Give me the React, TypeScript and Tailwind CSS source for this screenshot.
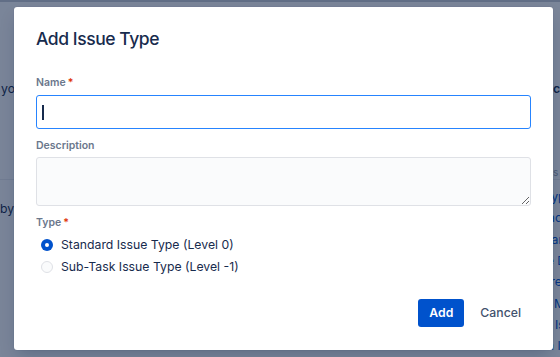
import React from 'react';

const listItems = [
  'CKP: Issue Type Scheme I',
  'CKP: Bug Tracking Issues',
  'CKP: Task Management Is:',
  'CKP: Service Desk Requests',
  'CKP: Software Development Pro',
  'CKP: Project Management Is:',
  'CKP: Default Issue Type I',
  'CKP: Kanban Issue Type Scheme',
];

const Label = ({ text, required, className = '' }: { text: string; required?: boolean; className?: string }) => (
  <label className={`flex h-[14px] items-center text-[10.5px] leading-[14px] font-semibold text-[#6b778c] ${className}`}>
    {text}
    {required && <span className="ml-[2px] text-[#de350b]">*</span>}
  </label>
);

const Radio = ({ label, checked }: { label: string; checked?: boolean }) => (
  <div className="flex h-[22px] items-center pl-[5px]">
    {checked ? (
      <span className="flex h-[12px] w-[12px] items-center justify-center rounded-full bg-[#0052cc]">
        <span className="h-[4px] w-[4px] rounded-full bg-white" />
      </span>
    ) : (
      <span className="h-[12px] w-[12px] rounded-full border-[1.5px] border-[#dfe1e6] bg-[#fafbfc]" />
    )}
    <span className="ml-[8px] text-[12.25px] leading-[18px] text-[#172b4d]">{label}</span>
  </div>
);

export default function App() {
  return (
    <div className="relative h-[357px] w-[560px] overflow-hidden bg-white font-['Inter','Noto_Sans',sans-serif]">
      {/* Page behind the dialog */}
      <div className="flex h-full flex-col">
        <div className="h-[5px] bg-[#c9ced6]" />
        <div className="mt-[77px] flex h-[20px] items-center text-[12.25px] leading-[20px] text-[#172b4d]">
          <span className="w-[553px] shrink-0 truncate pl-[1px]">you can add a new issue type to this scheme and then</span>
          <span className="font-semibold whitespace-nowrap">click</span>
        </div>
        <div className="mt-[66px] flex h-[14px] justify-end text-[10px] text-[#97a0af]">
          <span className="w-[7px] overflow-hidden">s</span>
        </div>
        <div className="h-[1px] shrink-0 bg-[#ebecf0]" />
        <div className="flex">
          <div className="w-[461px] shrink-0 pt-[19px] text-[12.25px] leading-[20px] whitespace-nowrap text-[#172b4d]">
            by Jira administrators
          </div>
          <ul className="pt-[7px]">
            {listItems.map((item) => (
              <li key={item} className="flex h-[21.3px] items-center whitespace-nowrap text-[12.25px] text-[#0052cc]">
                <span className="mr-[11px] ml-[1px] h-[5px] w-[5px] rounded-full bg-[#172b4d]" />
                {item}
              </li>
            ))}
          </ul>
        </div>
      </div>

      {/* Blanket */}
      <div className="absolute inset-0 bg-[rgba(9,30,66,0.54)]" />

      {/* Dialog */}
      <div className="absolute top-[7px] left-[14px] flex h-[343px] w-[539px] flex-col rounded-[3px] bg-white px-[22px] pb-[23px] shadow-[0_0_1px_rgba(9,30,66,0.31),0_8px_16px_-4px_rgba(9,30,66,0.25)]">
        <h1 className="mt-[20px] text-[17.5px] leading-[24px] font-medium tracking-[-0.025em] text-[#172b4d]">Add Issue Type</h1>

        <div className="mt-[25px] flex flex-col">
          <Label text="Name" required />
          <div className="relative mt-[5px] h-[34px] rounded-[3px] border border-[#2684ff] bg-white">
            <input className="h-full w-full bg-transparent px-[6px] text-[12.25px] text-[#172b4d] outline-none" />
            <span className="absolute top-[9px] left-[5px] h-[15px] w-[1.5px] bg-[#172b4d]" />
          </div>

          <Label text="Description" className="mt-[10px]" />
          <textarea className="mt-[4px] h-[49px] rounded-[3px] border-[1.5px] border-[#dfe1e6] bg-[#fafbfc] px-[6px] py-[4px] text-[12.25px] text-[#172b4d] outline-none" />

          <Label text="Type" required className="mt-[10px]" />
          <div className="mt-[4px] flex flex-col">
            <Radio label="Standard Issue Type (Level 0)" checked />
            <Radio label="Sub-Task Issue Type (Level -1)" />
          </div>
        </div>

        <div className="mt-auto flex justify-end gap-[6px]">
          <button className="h-[28px] rounded-[3px] bg-[#0052cc] px-[11px] text-[12.25px] font-semibold text-white">
            Add
          </button>
          <button className="h-[28px] rounded-[3px] px-[10px] text-[12.25px] font-medium text-[#42526e]">
            Cancel
          </button>
        </div>
      </div>
    </div>
  );
}
